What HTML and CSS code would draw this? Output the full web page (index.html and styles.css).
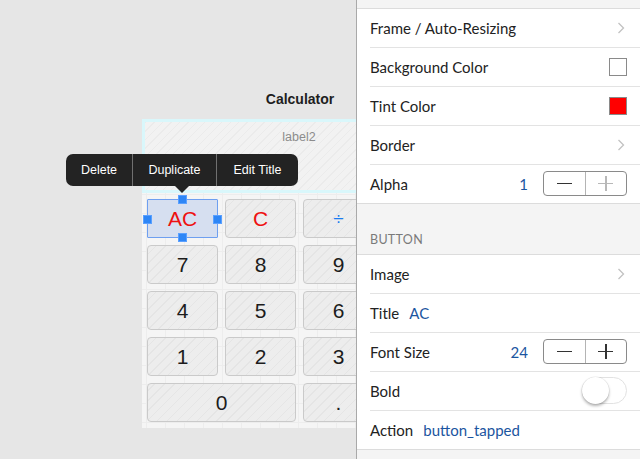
FILE: index.html
```html
<!DOCTYPE html>
<html>
<head>
<meta charset="utf-8">
<link rel="stylesheet" href="styles.css">
</head>
<body>
<div class="app">
  <div class="canvas">
    <div class="device">
      <div class="navtitle">Calculator</div>
      <div class="labelview"><span class="label2">label2</span></div>
      <div class="keypad">
        <div class="key key-sel red">AC
          <span class="handle h-top"></span>
          <span class="handle h-bottom"></span>
          <span class="handle h-left"></span>
          <span class="handle h-right"></span>
        </div>
        <div class="key red">C</div>
        <div class="key blue div">÷</div>
        <div class="key"></div>
        <div class="key">7</div>
        <div class="key">8</div>
        <div class="key">9</div>
        <div class="key"></div>
        <div class="key">4</div>
        <div class="key">5</div>
        <div class="key">6</div>
        <div class="key"></div>
        <div class="key">1</div>
        <div class="key">2</div>
        <div class="key">3</div>
        <div class="key tall"></div>
        <div class="key wide">0</div>
        <div class="key">.</div>
      </div>
    </div>
    <div class="menu">
      <div class="menu-item m-delete">Delete</div>
      <div class="menu-item m-dup">Duplicate</div>
      <div class="menu-item m-edit">Edit Title</div>
      <span class="menu-arrow"></span>
    </div>
  </div>

  <div class="panel">
    <div class="strip"></div>
    <div class="group">
      <div class="row"><div class="inner"><span class="lbl">Frame / Auto-Resizing</span><span class="spacer"></span>
        <svg class="chev" width="8" height="12" viewBox="0 0 8 12"><polyline points="1.5,1 6.5,6 1.5,11" fill="none" stroke="#c2c2c2" stroke-width="1.3"/></svg></div></div>
      <div class="row"><div class="inner"><span class="lbl">Background Color</span><span class="spacer"></span><span class="swatch sw-white"></span></div></div>
      <div class="row"><div class="inner"><span class="lbl">Tint Color</span><span class="spacer"></span><span class="swatch sw-red"></span></div></div>
      <div class="row"><div class="inner"><span class="lbl">Border</span><span class="spacer"></span>
        <svg class="chev" width="8" height="12" viewBox="0 0 8 12"><polyline points="1.5,1 6.5,6 1.5,11" fill="none" stroke="#c2c2c2" stroke-width="1.3"/></svg></div></div>
      <div class="row last"><div class="inner"><span class="lbl">Alpha</span><span class="spacer"></span><span class="val num">1</span>
        <span class="stepper"><span class="st-btn"><span class="minus"></span></span><span class="st-btn"><span class="plus dis"></span></span></span></div></div>
    </div>
    <div class="section"><span class="section-title">BUTTON</span></div>
    <div class="group">
      <div class="row"><div class="inner"><span class="lbl">Image</span><span class="spacer"></span>
        <svg class="chev" width="8" height="12" viewBox="0 0 8 12"><polyline points="1.5,1 6.5,6 1.5,11" fill="none" stroke="#c2c2c2" stroke-width="1.3"/></svg></div></div>
      <div class="row"><div class="inner"><span class="lbl">Title</span><span class="val inline">AC</span></div></div>
      <div class="row"><div class="inner"><span class="lbl">Font Size</span><span class="spacer"></span><span class="val num">24</span>
        <span class="stepper"><span class="st-btn"><span class="minus"></span></span><span class="st-btn"><span class="plus"></span></span></span></div></div>
      <div class="row"><div class="inner"><span class="lbl">Bold</span><span class="spacer"></span><span class="toggle"><span class="knob"></span></span></div></div>
      <div class="row last"><div class="inner"><span class="lbl">Action</span><span class="val inline">button_tapped</span></div></div>
    </div>
    <div class="bottom"></div>
  </div>
</div>
</body>
</html>
```

FILE: styles.css
```css
* { box-sizing: border-box; }
html, body { margin: 0; padding: 0; }
body { width: 640px; height: 459px; overflow: hidden; background: #e6e6e6; }

.app { display: flex; width: 640px; height: 459px; }

.canvas {
  position: relative;
  width: 356px;
  height: 459px;
  flex-shrink: 0;
  overflow: hidden;
  background: #e6e6e6;
  padding: 78px 0 0 142px;
}

.device { width: 320px; display: flex; flex-direction: column; }

.navtitle {
  height: 41px;
  display: flex;
  align-items: center;
  justify-content: center;
  font-family: "Liberation Sans", Arial, sans-serif;
  font-weight: bold;
  font-size: 14px;
  color: #1e1e1e;
  padding-right: 4px;
}

.labelview {
  height: 74px;
  border: 3px solid #d9f7fb;
  background: repeating-linear-gradient(-45deg, #f2f2f2 0 5px, #ebebeb 5px 6px);
  display: flex;
  justify-content: center;
  padding: 8px 6px 0 0;
}
.label2 {
  font-family: "Liberation Sans", Arial, sans-serif;
  font-size: 12.5px;
  color: #8c8c8c;
}

.keypad {
  height: 235px;
  padding: 6px 5px;
  display: grid;
  grid-template-columns: repeat(4, 71px);
  grid-template-rows: repeat(5, 39px);
  gap: 7px;
  background-color: #f5f5f5;
  background-image:
    linear-gradient(to right, #ededed 1px, transparent 1px),
    linear-gradient(to bottom, #ededed 1px, transparent 1px);
  background-size: 19px 19px;
  background-position: 4px 1px;
}

.key {
  position: relative;
  border: 1px solid #cacaca;
  border-radius: 4px;
  background: repeating-linear-gradient(-45deg, #ededed 0 6px, #e5e5e5 6px 7px);
  display: flex;
  align-items: center;
  justify-content: center;
  font-family: "Liberation Sans", Arial, sans-serif;
  font-size: 21px;
  color: #1c1c1c;
}
.key.red { color: #ee1111; }
.key.blue { color: #1a7cf0; }
.key.div { font-size: 19px; }
.key.wide { grid-column: span 2; }
.key.tall { grid-row: span 2; }
.key-sel {
  background: #d6dff0;
  border-color: #6e9ff0;
  border-radius: 1px;
}

.handle {
  position: absolute;
  width: 9px;
  height: 9px;
  background: #2e86f6;
  border: 1px solid #5aa0ff;
}
.h-top { top: -5px; left: 30px; }
.h-bottom { bottom: -5px; left: 30px; }
.h-left { left: -5px; top: 15px; }
.h-right { right: -5px; top: 15px; }

.menu {
  position: absolute;
  left: 66px;
  top: 154px;
  width: 232px;
  height: 32px;
  background: #232323;
  border-radius: 7px;
  display: flex;
  font-family: "Liberation Sans", Arial, sans-serif;
  font-size: 12.5px;
  color: #ffffff;
}
.menu-item {
  display: flex;
  align-items: center;
  justify-content: center;
  height: 100%;
}
.m-delete { width: 67px; border-right: 1px solid #707070; }
.m-dup { width: 84px; border-right: 1px solid #707070; }
.m-edit { flex: 1; }
.menu-arrow {
  position: absolute;
  left: 109px;
  top: 32px;
  width: 0;
  height: 0;
  border-left: 7px solid transparent;
  border-right: 7px solid transparent;
  border-top: 7px solid #232323;
}

/* Panel */
.panel {
  width: 284px;
  height: 459px;
  border-left: 1px solid #a9a9a9;
  background: #f4f4f4;
  display: flex;
  flex-direction: column;
  font-family: "Lato", "Noto Sans", sans-serif;
  font-size: 15px;
  color: #222;
}
.strip { height: 9px; border-bottom: 1px solid #dcdcdc; flex-shrink: 0; }
.group { background: #fff; flex-shrink: 0; }
.row { height: 39px; padding-left: 13px; }
.inner {
  height: 39px;
  display: flex;
  align-items: center;
  padding-right: 13px;
  padding-bottom: 1px;
  border-bottom: 1px solid #e3e3e3;
}
.row.last .inner { border-bottom: none; height: 38px; }
.row.last { height: 38px; }
.spacer { flex: 1; }
.lbl { color: #222; }
.chev { margin-right: 2px; }

.swatch { width: 18px; height: 18px; }
.sw-white { background: #fff; border: 1px solid #8a8a8a; }
.sw-red { background: #ff0000; border: 1px solid #8a8a8a; }

.val { color: #1b55a0; }
.val.num { margin-right: 15px; }
.val.inline { margin-left: 10px; }

.stepper {
  width: 84px;
  height: 25px;
  border: 1px solid #8a8a8a;
  border-radius: 4px;
  display: flex;
}
.st-btn {
  flex: 1;
  display: flex;
  align-items: center;
  justify-content: center;
  position: relative;
}
.st-btn:first-child { border-right: 1px solid #b4b4b4; }
.minus { width: 15px; height: 1.5px; background: #333; }
.plus { position: relative; width: 15px; height: 15px; }
.plus::before, .plus::after {
  content: "";
  position: absolute;
  background: #333;
}
.plus::before { left: 0; top: 7px; width: 15px; height: 1.3px; }
.plus::after { top: 0; left: 7px; width: 1.3px; height: 15px; }
.plus.dis::before, .plus.dis::after { background: #b8b8b8; }

.section {
  height: 52px;
  border-top: 1px solid #dcdcdc;
  border-bottom: 1px solid #dcdcdc;
  display: flex;
  align-items: flex-end;
  padding: 0 0 7px 13px;
  flex-shrink: 0;
}
.section-title {
  font-size: 12.5px;
  color: #7a7a7a;
  letter-spacing: 0.3px;
}

.toggle {
  position: relative;
  width: 45px;
  height: 27px;
  border: 1px solid #e2e2e2;
  border-radius: 14px;
  background: #fff;
}
.knob {
  position: absolute;
  left: -1px;
  top: -1px;
  width: 27px;
  height: 27px;
  border-radius: 50%;
  background: #fff;
  box-shadow: 0 2px 3px rgba(0,0,0,0.3), 0 0 0 0.5px rgba(0,0,0,0.08);
}

.bottom { flex: 1; border-top: 1px solid #dcdcdc; }
```
